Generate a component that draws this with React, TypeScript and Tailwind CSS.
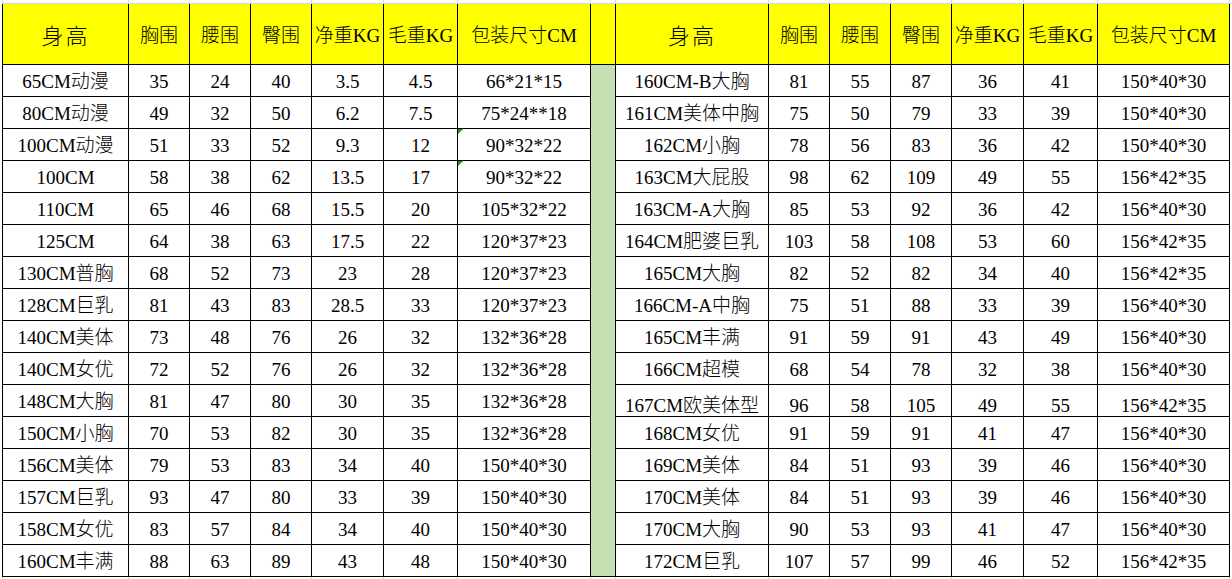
import React from "react";

const colsClass =
  "grid grid-cols-[126px_61px_61px_61px_72px_74px_133px_25px_153px_61px_61px_61px_72px_74px_132px]";

const headers = ["身高", "胸围", "腰围", "臀围", "净重KG", "毛重KG", "包装尺寸CM"];

const leftRows = [
  ["65CM动漫", "35", "24", "40", "3.5", "4.5", "66*21*15"],
  ["80CM动漫", "49", "32", "50", "6.2", "7.5", "75*24**18"],
  ["100CM动漫", "51", "33", "52", "9.3", "12", "90*32*22"],
  ["100CM", "58", "38", "62", "13.5", "17", "90*32*22"],
  ["110CM", "65", "46", "68", "15.5", "20", "105*32*22"],
  ["125CM", "64", "38", "63", "17.5", "22", "120*37*23"],
  ["130CM普胸", "68", "52", "73", "23", "28", "120*37*23"],
  ["128CM巨乳", "81", "43", "83", "28.5", "33", "120*37*23"],
  ["140CM美体", "73", "48", "76", "26", "32", "132*36*28"],
  ["140CM女优", "72", "52", "76", "26", "32", "132*36*28"],
  ["148CM大胸", "81", "47", "80", "30", "35", "132*36*28"],
  ["150CM小胸", "70", "53", "82", "30", "35", "132*36*28"],
  ["156CM美体", "79", "53", "83", "34", "40", "150*40*30"],
  ["157CM巨乳", "93", "47", "80", "33", "39", "150*40*30"],
  ["158CM女优", "83", "57", "84", "34", "40", "150*40*30"],
  ["160CM丰满", "88", "63", "89", "43", "48", "150*40*30"],
];

const rightRows = [
  ["160CM-B大胸", "81", "55", "87", "36", "41", "150*40*30"],
  ["161CM美体中胸", "75", "50", "79", "33", "39", "150*40*30"],
  ["162CM小胸", "78", "56", "83", "36", "42", "150*40*30"],
  ["163CM大屁股", "98", "62", "109", "49", "55", "156*42*35"],
  ["163CM-A大胸", "85", "53", "92", "36", "42", "156*40*30"],
  ["164CM肥婆巨乳", "103", "58", "108", "53", "60", "156*42*35"],
  ["165CM大胸", "82", "52", "82", "34", "40", "156*42*35"],
  ["166CM-A中胸", "75", "51", "88", "33", "39", "156*40*30"],
  ["165CM丰满", "91", "59", "91", "43", "49", "156*40*30"],
  ["166CM超模", "68", "54", "78", "32", "38", "156*40*30"],
  ["167CM欧美体型", "96", "58", "105", "49", "55", "156*42*35"],
  ["168CM女优", "91", "59", "91", "41", "47", "156*40*30"],
  ["169CM美体", "84", "51", "93", "39", "46", "156*40*30"],
  ["170CM美体", "84", "51", "93", "39", "46", "156*40*30"],
  ["170CM大胸", "90", "53", "93", "41", "47", "156*40*30"],
  ["172CM巨乳", "107", "57", "99", "46", "52", "156*42*35"],
];

// rows whose pack-size cell shows excel's little green error mark
const flagged = [2, 3];

const GridStrip = () => (
  <div className={`${colsClass} ml-[2px] h-[3px] border-l border-[#d4d4d4]`}>
    {Array.from({ length: 15 }).map((_, i) => (
      <div key={i} className="border-r border-[#d4d4d4]" />
    ))}
  </div>
);

const Cell = ({ text, flag, low }: { text: string; flag?: boolean; low?: boolean }) => (
  <div
    className={`relative h-[32px] flex items-center justify-center border-r border-b border-black text-[19px] leading-none whitespace-nowrap ${
      low ? "pt-[9px]" : "pt-[2px]"
    }`}
  >
    {flag && (
      <span className="absolute left-0 top-0 w-0 h-0 border-t-[5px] border-r-[5px] border-t-[#1e8a2e] border-r-transparent" />
    )}
    {text}
  </div>
);

export default function App() {
  return (
    <div className="w-[1232px] h-[579px] bg-white text-black overflow-hidden font-light font-['Liberation_Serif','Noto_Sans_CJK_SC',serif]">
      <GridStrip />
      <div className="ml-[2px] w-[1230px] border-t border-[#d4d4d4]" />
      <div className={`${colsClass} ml-[2px] border-l border-black`}>
        {/* header row */}
        {[...headers, "", ...headers].map((h, i) => (
          <div
            key={"h" + i}
            className={`h-[61px] flex items-center justify-center pt-[4px] bg-[#ffff00] border-r border-b border-black whitespace-nowrap ${
              h === "身高" ? "text-[22px] tracking-[2px]" : "text-[19px]"
            }`}
          >
            {h}
          </div>
        ))}

        {/* green spacer column */}
        <div className="col-[8] row-[2/span_16] bg-[#c6e0b4] border-r border-b border-black" />

        {leftRows.map((row, r) => (
          <React.Fragment key={"r" + r}>
            {row.map((v, c) => (
              <Cell key={"l" + c} text={v} flag={c === 6 && flagged.includes(r)} />
            ))}
            {rightRows[r].map((v, c) => (
              <Cell key={"rr" + c} text={v} low={r === 10} />
            ))}
          </React.Fragment>
        ))}
      </div>
      <GridStrip />
    </div>
  );
}
